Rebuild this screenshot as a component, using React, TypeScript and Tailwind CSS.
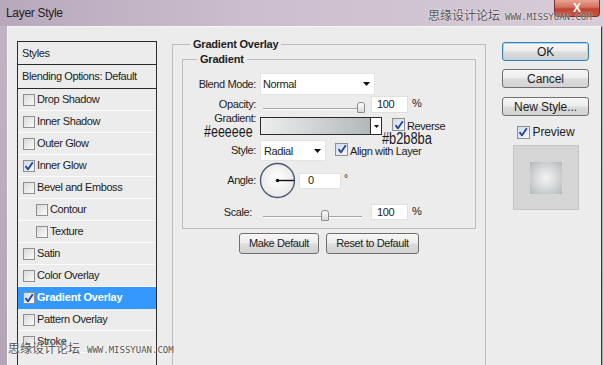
import React from "react";

function Box({ checked = false, small = false }: { checked?: boolean; small?: boolean }) {
  return (
    <span
      className={
        (small ? "w-[12px] h-[12px] " : "w-[13px] h-[13px] ") +
        "inline-flex shrink-0 items-center justify-center border border-[#8e8f8f] " +
        (checked
          ? "bg-[linear-gradient(135deg,#cfdcec_0%,#f4f8fc_100%)]"
          : "bg-[linear-gradient(135deg,#d9d9d9_0%,#fbfbfb_100%)]")
      }
    >
      {checked && (
        <svg width="10" height="10" viewBox="0 0 10 10">
          <path d="M1.5 5.2 L4 8.3 L8.8 1.2" stroke="#27479c" strokeWidth="1.9" fill="none" strokeLinejoin="round" />
        </svg>
      )}
    </span>
  );
}

function Arrow() {
  return (
    <svg width="7" height="4" viewBox="0 0 7 4">
      <path d="M0 0 H7 L3.5 4 Z" fill="#111" />
    </svg>
  );
}

function Label({ children, extra = "" }: { children: React.ReactNode; extra?: string }) {
  return <span className={"w-[73px] shrink-0 text-right " + extra}>{children}</span>;
}

function Slider({ thumb, track }: { thumb: "right" | "mid"; track: "long" | "short" }) {
  return (
    <div className="relative w-[105px] h-[17px] shrink-0">
      <div
        className={
          (track === "long" ? "w-[102px] " : "w-[99px] ") +
          "absolute left-[3px] top-[12px] h-[2px] border-t border-t-[#a4a4a4] border-b border-b-white"
        }
      />
      <div
        className={
          (thumb === "right" ? "left-[97px] " : "left-[61px] ") +
          "absolute top-[6px] w-[8px] h-[11px] rounded-t-[3px] rounded-b-[1px] border border-[#8c8c8c] bg-[linear-gradient(180deg,#ffffff_0%,#d8d8d8_100%)]"
        }
      />
    </div>
  );
}

function Btn({ children, w, primary = false }: { children: React.ReactNode; w: string; primary?: boolean }) {
  return (
    <div
      className={
        w +
        " flex items-center justify-center rounded-[3px] border bg-[linear-gradient(180deg,#f7f7f7_0%,#ececec_48%,#dcdcdc_52%,#d2d2d2_100%)] " +
        (primary ? "border-[#3c7fb1] shadow-[inset_0_0_0_1px_#a8d8f2]" : "border-[#707070]")
      }
    >
      {children}
    </div>
  );
}

const items: { label: string; checked?: boolean; indent?: boolean; active?: boolean }[] = [
  { label: "Drop Shadow" },
  { label: "Inner Shadow" },
  { label: "Outer Glow" },
  { label: "Inner Glow", checked: true },
  { label: "Bevel and Emboss" },
  { label: "Contour", indent: true },
  { label: "Texture", indent: true },
  { label: "Satin" },
  { label: "Color Overlay" },
  { label: "Gradient Overlay", checked: true, active: true },
  { label: "Pattern Overlay" },
  { label: "Stroke" },
];

export default function App() {
  return (
    <div className="relative w-[603px] h-[365px] overflow-hidden bg-[linear-gradient(180deg,#c3b4c5_0%,#b4a4b7_100%)] font-['Liberation_Sans',Arial,sans-serif] text-[11px] tracking-[-0.4px] text-[#1c1c1c]">
      {/* Title bar */}
      <div className="h-[26px] flex items-start justify-between bg-[linear-gradient(90deg,#b8a8bc_0%,#cbbdcd_40%,#d8ccd8_100%)]">
        <span className="mt-[4px] ml-[6px] text-[12px] tracking-[-0.3px] text-[#1e1e1e]">Layer Style</span>
        <div className="mr-[3px] w-[46px] h-[17px] rounded-b-[4px] border border-t-0 border-[#7a3029] bg-[linear-gradient(180deg,#e8a393_0%,#d5705e_45%,#c04432_55%,#c9533f_100%)] flex items-center justify-center text-white font-bold text-[12px] tracking-normal">
          X
        </div>
      </div>

      {/* Body */}
      <div className="flex items-start h-[339px] ml-[7px] mr-[1px] bg-[#ececec] border-t border-l border-r border-t-[#f6f6f6] border-l-[#f6f6f6] border-r-[#3a3a3a]">
        {/* Styles list */}
        <div className="mt-[14px] ml-[9px] w-[140px] h-[330px] shrink-0 border border-b-0 border-[#2b2b2b] flex flex-col">
          <div className="h-[23px] border-b border-[#2b2b2b] flex items-center pl-[4px]">Styles</div>
          <div className="h-[24px] border-b border-[#2b2b2b] flex items-center pl-[4px]">Blending Options: Default</div>
          {items.map((it) => (
            <div
              key={it.label}
              className={
                "h-[22px] flex items-center border-b " +
                (it.indent ? "pl-[18px] " : "pl-[5px] ") +
                (it.active
                  ? "bg-[#3399ff] border-[#3399ff] text-white font-bold tracking-[-0.2px]"
                  : "border-[#fbfbfb]")
              }
            >
              <Box small checked={it.checked} />
              <span className="ml-[2px]">{it.label}</span>
            </div>
          ))}
        </div>

        {/* Gradient Overlay group */}
        <fieldset className="mt-[11px] ml-[15px] w-[314px] h-[340px] shrink-0 border border-[#bcbcbc]">
          <legend className="ml-[17px] px-[3px] font-bold leading-[13px] tracking-[-0.2px]">Gradient Overlay</legend>
          <fieldset className="mt-[2px] ml-[9px] w-[294px] border border-[#bcbcbc] pb-[7px]">
            <legend className="ml-[14px] px-[3px] font-bold leading-[13px] tracking-[-0.2px]">Gradient</legend>

            {/* Blend mode */}
            <div className="mt-[7px] h-[22px] flex items-center">
              <Label>Blend Mode:</Label>
              <div className="ml-[4px] w-[115px] h-[22px] bg-white border border-[#e4e4e4] flex items-center justify-between pl-[2px] pr-[4px]">
                <span className="mt-[1px]">Normal</span>
                <Arrow />
              </div>
            </div>

            {/* Opacity */}
            <div className="mt-[1px] h-[17px] flex items-center">
              <Label>Opacity:</Label>
              <div className="ml-[4px] flex items-center">
                <Slider thumb="right" track="long" />
                <div className="ml-[6px] w-[37px] h-[17px] bg-white border border-[#e0e0e0] flex items-center pl-[5px]">100</div>
                <span className="ml-[4px] self-start -mt-[1px]">%</span>
              </div>
            </div>

            {/* Gradient */}
            <div className="relative mt-[4px] h-[18px] flex items-center">
              <Label extra="self-start -mt-[5px] leading-[12px]">Gradient:</Label>
              <div className="ml-[4px] w-[122px] h-[18px] border border-[#2a2a2a] flex">
                <div className="flex-1 bg-[linear-gradient(90deg,#eeeeee_0%,#b2b8ba_100%)]" />
                <div className="w-[11px] border-l border-[#2a2a2a] bg-white flex items-center justify-center">
                  <svg width="5" height="3" viewBox="0 0 5 3">
                    <path d="M0 0 H5 L2.5 3 Z" fill="#111" />
                  </svg>
                </div>
              </div>
              <span className="ml-[10px]">
                <Box checked />
              </span>
              <span className="ml-[2px]">Reverse</span>
              <span className="absolute left-[21px] top-[8px] origin-left scale-x-[0.78] text-[16px] leading-[14px] tracking-normal text-[#1a1a1a]">
                #eeeeee
              </span>
              <span className="absolute left-[199px] top-[15px] origin-left scale-x-[0.8] text-[16px] leading-[14px] tracking-normal text-[#1a1a1a]">
                #b2b8ba
              </span>
            </div>

            {/* Style */}
            <div className="mt-[5px] h-[21px] flex items-center">
              <Label>Style:</Label>
              <div className="ml-[4px] w-[66px] h-[21px] bg-white border border-[#e4e4e4] flex items-center justify-between pl-[3px] pr-[4px]">
                <span className="mt-[1px]">Radial</span>
                <Arrow />
              </div>
              <span className="ml-[9px]">
                <Box checked />
              </span>
              <span className="ml-[2px] mt-[2px]">Align with Layer</span>
            </div>

            {/* Angle */}
            <div className="mt-[1px] h-[36px] flex items-center">
              <Label>Angle:</Label>
              <svg className="ml-[3px] shrink-0" width="37" height="37" viewBox="0 0 37 37">
                <defs>
                  <radialGradient id="dial" cx="50%" cy="45%" r="60%">
                    <stop offset="0%" stopColor="#ffffff" />
                    <stop offset="100%" stopColor="#e6e6e6" />
                  </radialGradient>
                </defs>
                <circle cx="18.5" cy="18.5" r="17" fill="url(#dial)" stroke="#4d5a73" strokeWidth="1.4" />
                <line x1="18.5" y1="18.5" x2="35" y2="18.5" stroke="#111" strokeWidth="1.4" />
                <circle cx="18.5" cy="18.5" r="1.8" fill="#111" />
              </svg>
              <div className="ml-[3px] w-[42px] h-[16px] bg-white border border-[#e0e0e0] flex items-center pl-[8px] mt-[1px]">0</div>
              <span className="ml-[3px] self-start mt-[9px] text-[10px]">°</span>
            </div>

            {/* Scale */}
            <div className="mt-[5px] h-[18px] flex items-center">
              <Label extra="pr-[4px]">Scale:</Label>
              <div className="ml-[4px] flex items-center">
                <Slider thumb="mid" track="short" />
                <div className="ml-[6px] w-[37px] h-[16px] bg-white border border-[#e0e0e0] flex items-center pl-[5px]">100</div>
                <span className="ml-[4px] self-start -mt-[1px]">%</span>
              </div>
            </div>
          </fieldset>

          <div className="mt-[4px] ml-[9px] w-[294px] flex justify-center gap-[7px]">
            <Btn w="w-[80px] h-[21px]">Make Default</Btn>
            <Btn w="w-[93px] h-[21px]">Reset to Default</Btn>
          </div>
        </fieldset>

        {/* Right column */}
        <div className="mt-[15px] ml-[16px] w-[87px] shrink-0 flex flex-col items-center text-[12px] tracking-[-0.1px]">
          <Btn w="w-[87px] h-[19px]" primary>OK</Btn>
          <div className="mt-[8px]">
            <Btn w="w-[87px] h-[19px]">Cancel</Btn>
          </div>
          <div className="mt-[9px]">
            <Btn w="w-[87px] h-[19px]">New Style...</Btn>
          </div>
          <div className="mt-[9px] h-[14px] flex items-center">
            <Box checked />
            <span className="ml-[3px]">Preview</span>
          </div>
          <div className="mt-[6px] w-[66px] h-[65px] bg-[#d5d5d5] border border-[#c6c6c6] flex items-center justify-center">
            <div className="w-[32px] h-[32px] bg-[radial-gradient(circle,#f4f4f4_0%,#d2d5d6_55%,#b2b8ba_100%)]" />
          </div>
        </div>
      </div>

      {/* Watermarks */}
      <div className="absolute left-[428px] top-[8px] flex items-end tracking-normal">
        <span className="font-['Noto_Sans_CJK_SC',sans-serif] text-[12px] leading-[14px] text-[#555] [text-shadow:0_0_2px_#fff]">思缘设计论坛</span>
        <span className="ml-[5px] font-['DejaVu_Sans_Mono',monospace] text-[9px] leading-[10px] text-[#555] [text-shadow:0_0_2px_#fff]">WWW.MISSYUAN.COM</span>
      </div>
      <div className="absolute left-[8px] top-[341px] flex items-end tracking-normal">
        <span className="font-['Noto_Sans_CJK_SC',sans-serif] text-[12px] leading-[14px] text-[#555] [text-shadow:0_0_2px_#fff]">思缘设计论坛</span>
        <span className="ml-[7px] font-['DejaVu_Sans_Mono',monospace] text-[9px] leading-[10px] text-[#555] [text-shadow:0_0_2px_#fff]">WWW.MISSYUAN.COM</span>
      </div>
    </div>
  );
}
